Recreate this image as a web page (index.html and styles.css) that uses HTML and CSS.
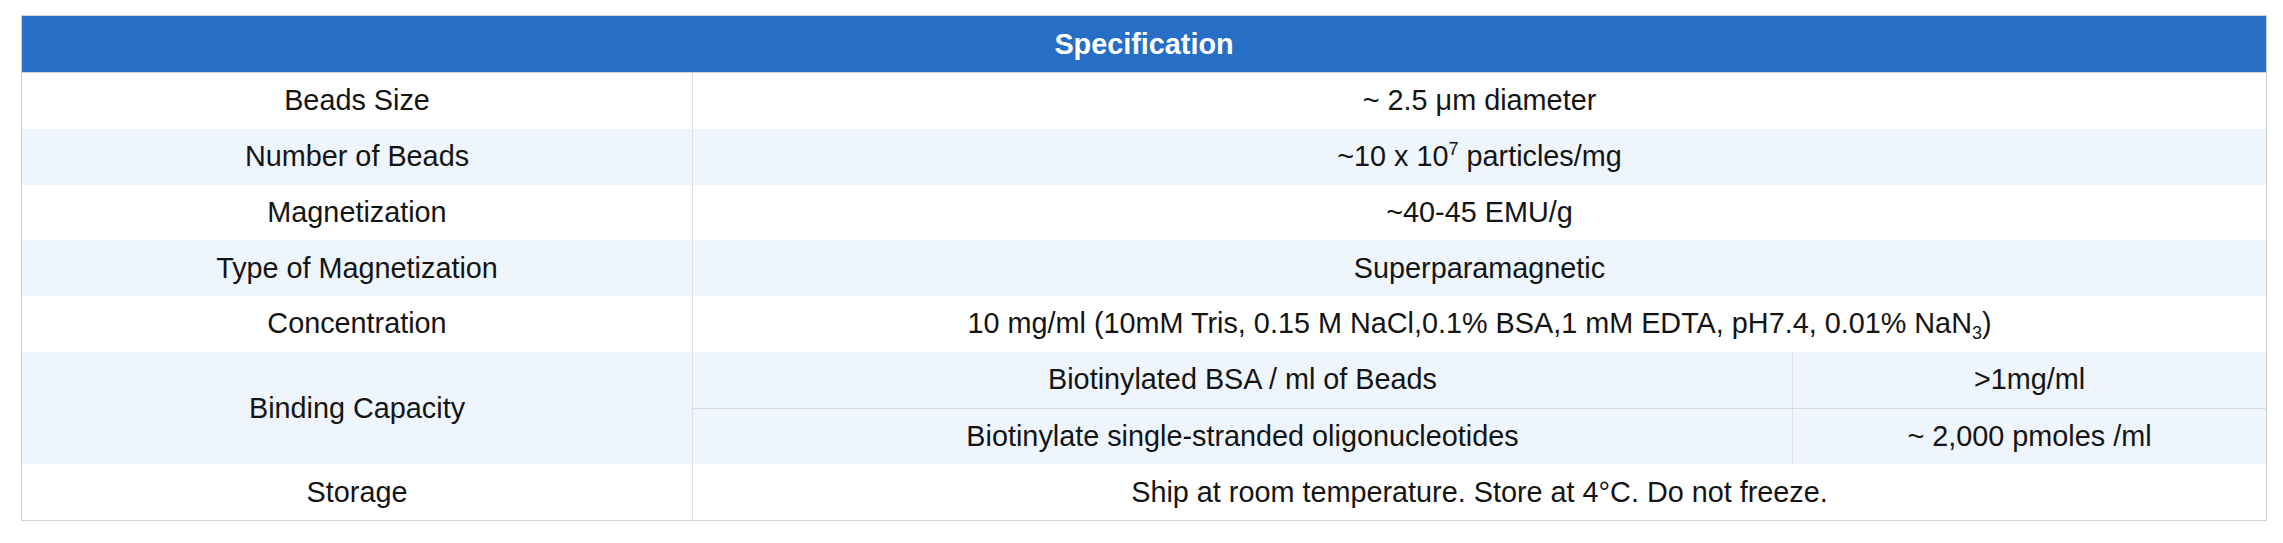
FILE: index.html
```html
<!DOCTYPE html>
<html lang="en">
<head>
<meta charset="utf-8">
<title>Specification</title>
<link rel="stylesheet" href="styles.css">
</head>
<body>
<div class="wrap">
<table class="spec">
  <colgroup>
    <col class="c1">
    <col class="c2">
    <col class="c3">
  </colgroup>
  <thead>
    <tr><th colspan="3">Specification</th></tr>
  </thead>
  <tbody>
    <tr>
      <td class="label">Beads Size</td>
      <td colspan="2">~ 2.5 μm diameter</td>
    </tr>
    <tr class="alt">
      <td class="label">Number of Beads</td>
      <td colspan="2">~10 x 10<sup>7</sup> particles/mg</td>
    </tr>
    <tr>
      <td class="label">Magnetization</td>
      <td colspan="2">~40-45 EMU/g</td>
    </tr>
    <tr class="alt">
      <td class="label">Type of Magnetization</td>
      <td colspan="2">Superparamagnetic</td>
    </tr>
    <tr>
      <td class="label">Concentration</td>
      <td colspan="2">10 mg/ml (10mM Tris, 0.15 M NaCl,0.1% BSA,1 mM EDTA, pH7.4, 0.01% NaN<sub>3</sub>)</td>
    </tr>
    <tr class="alt">
      <td class="label" rowspan="2">Binding Capacity</td>
      <td>Biotinylated BSA / ml of Beads</td>
      <td class="sub-val">&gt;1mg/ml</td>
    </tr>
    <tr class="alt sub-second">
      <td>Biotinylate single-stranded oligonucleotides</td>
      <td class="sub-val">~ 2,000 pmoles /ml</td>
    </tr>
    <tr>
      <td class="label">Storage</td>
      <td colspan="2">Ship at room temperature. Store at 4°C. Do not freeze.</td>
    </tr>
  </tbody>
</table>
</div>
</body>
</html>
```

FILE: styles.css
```css
html, body {
  margin: 0;
  padding: 0;
  background: #ffffff;
}

.wrap {
  padding: 15px 0 0 21px;
}

.spec {
  width: 2245px;
  table-layout: fixed;
  border-collapse: collapse;
  border: 1px solid #cfd3d8;
  font-family: "Liberation Sans", Arial, sans-serif;
  font-size: 28.8px;
  color: #141414;
}

.c1 { width: 671px; }
.c2 { width: 1100px; }
.c3 { width: 474px; }

.spec th {
  height: 56px;
  padding: 0;
  background: #276ec6;
  color: #ffffff;
  font-weight: bold;
  text-align: center;
  vertical-align: middle;
  border-bottom: 1px solid #c9d2dc;
}

.spec td {
  height: 55.75px;
  padding: 0;
  text-align: center;
  vertical-align: middle;
  background: #ffffff;
}

.spec tr.alt td {
  background: #eef5fd;
}

.spec td.label {
  border-right: 1px solid #dcdfe3;
}

.spec td.sub-val {
  border-left: 1px solid #dcdfe3;
}

.spec tr.sub-second td {
  border-top: 1px solid #d6dade;
}

.spec sup {
  font-size: 18px;
  vertical-align: 11px;
  line-height: 0;
}

.spec sub {
  font-size: 18px;
  vertical-align: -6px;
  line-height: 0;
}
```
